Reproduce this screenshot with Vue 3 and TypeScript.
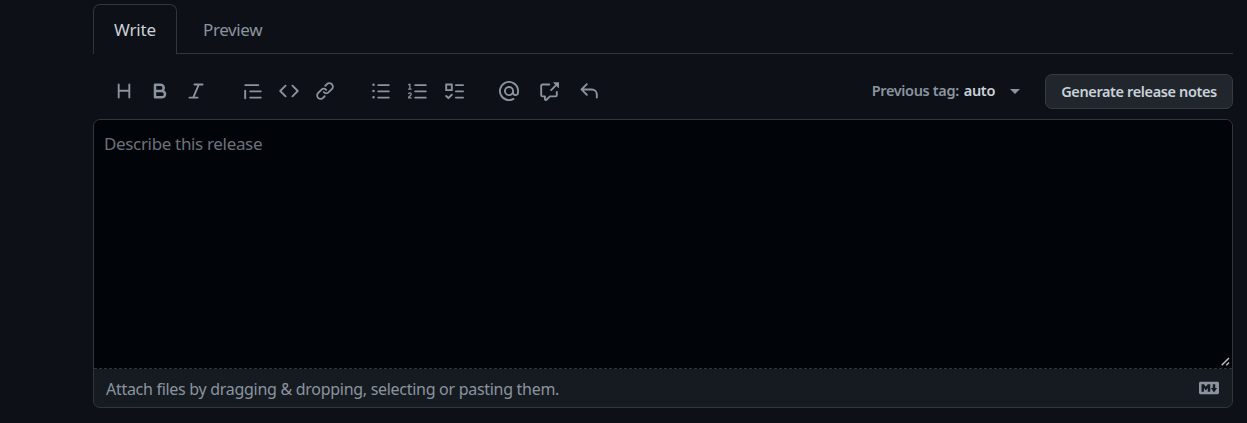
<script setup lang="ts">
interface ToolIcon {
  name: string
  path: string
}

const groups: ToolIcon[][] = [
  [
    { name: 'heading', path: 'M3.75 2a.75.75 0 01.75.75V7h7V2.75a.75.75 0 011.5 0v10.5a.75.75 0 01-1.5 0V8.5h-7v4.75a.75.75 0 01-1.5 0V2.75A.75.75 0 013.75 2z' },
    { name: 'bold', path: 'M4 2a1 1 0 00-1 1v10a1 1 0 001 1h5.5a3.5 3.5 0 001.852-6.47A3.5 3.5 0 008.5 2H4zm4.5 5a1.5 1.5 0 100-3H5v3h3.5zM5 9v3h4.5a1.5 1.5 0 000-3H5z' },
    { name: 'italic', path: 'M6 2.75A.75.75 0 016.75 2h6.5a.75.75 0 010 1.5h-2.505l-3.858 9H9.25a.75.75 0 010 1.5h-6.5a.75.75 0 010-1.5h2.505l3.858-9H6.75A.75.75 0 016 2.75z' },
  ],
  [
    { name: 'quote', path: 'M1.75 2.5a.75.75 0 000 1.5h10.5a.75.75 0 000-1.5H1.75zm4 5a.75.75 0 000 1.5h8.5a.75.75 0 000-1.5h-8.5zm0 5a.75.75 0 000 1.5h8.5a.75.75 0 000-1.5h-8.5zM2.5 7.75a.75.75 0 00-1.5 0v6a.75.75 0 001.5 0v-6z' },
    { name: 'code', path: 'M4.72 3.22a.75.75 0 011.06 1.06L2.06 8l3.72 3.72a.75.75 0 11-1.06 1.06L.47 8.53a.75.75 0 010-1.06l4.25-4.25zm6.56 0a.75.75 0 10-1.06 1.06L13.94 8l-3.72 3.72a.75.75 0 101.06 1.06l4.25-4.25a.75.75 0 000-1.06l-4.25-4.25z' },
    { name: 'link', path: 'M7.775 3.275a.75.75 0 001.06 1.06l1.25-1.25a2 2 0 112.83 2.83l-2.5 2.5a2 2 0 01-2.83 0 .75.75 0 00-1.06 1.06 3.5 3.5 0 004.95 0l2.5-2.5a3.5 3.5 0 00-4.95-4.95l-1.25 1.25zm-4.69 9.64a2 2 0 010-2.83l2.5-2.5a2 2 0 012.83 0 .75.75 0 001.06-1.06 3.5 3.5 0 00-4.95 0l-2.5 2.5a3.5 3.5 0 004.95 4.95l1.25-1.25a.75.75 0 00-1.06-1.06l-1.25 1.25a2 2 0 01-2.83 0z' },
  ],
  [
    { name: 'bullets', path: 'M2 4a1 1 0 100-2 1 1 0 000 2zm3.75-1.5a.75.75 0 000 1.5h8.5a.75.75 0 000-1.5h-8.5zm0 5a.75.75 0 000 1.5h8.5a.75.75 0 000-1.5h-8.5zm0 5a.75.75 0 000 1.5h8.5a.75.75 0 000-1.5h-8.5zM3 8a1 1 0 11-2 0 1 1 0 012 0zm-1 6a1 1 0 100-2 1 1 0 000 2z' },
    { name: 'numbers', path: 'M2.003 2.5a.5.5 0 00-.723-.447l-1.003.5a.5.5 0 00.446.895l.28-.14V6H.5a.5.5 0 000 1h2.006a.5.5 0 100-1h-.503V2.5zM5 3.25a.75.75 0 01.75-.75h8.5a.75.75 0 010 1.5h-8.5A.75.75 0 015 3.25zm0 5a.75.75 0 01.75-.75h8.5a.75.75 0 010 1.5h-8.5A.75.75 0 015 8.25zm0 5a.75.75 0 01.75-.75h8.5a.75.75 0 010 1.5h-8.5a.75.75 0 01-.75-.75zM.924 10.32l.003-.004a.851.851 0 01.144-.153A.66.66 0 011.5 10c.195 0 .306.068.374.146a.57.57 0 01.128.376c0 .453-.269.682-.8 1.078l-.035.025C.692 11.98 0 12.495 0 13.5a.5.5 0 00.5.5h2.003a.5.5 0 000-1H1.146c.132-.197.351-.372.654-.597l.047-.035c.47-.35 1.156-.858 1.156-1.845 0-.365-.118-.744-.377-1.038-.268-.303-.658-.484-1.126-.484-.48 0-.84.202-1.068.392a1.858 1.858 0 00-.348.384l-.007.011-.002.004-.001.002-.001.001a.5.5 0 00.851.525z' },
    { name: 'tasks', path: 'M1.5 2A.5.5 0 001 2.500v5a.5.5 0 00.5.5h5a.5.5 0 00.5-.5v-5a.5.5 0 00-.5-.5h-5zm1 1.500h3v3h-3v-3zM9.500 2.500a.75.75 0 000 1.500h5.750a.75.75 0 000-1.500H9.500zm0 5a.75.75 0 000 1.500h5.750a.75.75 0 000-1.500H9.500zm0 5a.75.75 0 000 1.500h5.750a.75.75 0 000-1.500H9.500zM6.780 11.530a.75.75 0 10-1.060-1.060L3.500 12.690l-1.220-1.220a.75.75 0 10-1.060 1.060l1.750 1.750a.75.75 0 001.060 0l2.750-2.750z' },
  ],
  [
    { name: 'mention', path: 'M4.75 2.37a6.5 6.5 0 006.5 11.26.75.75 0 01.75 1.298 8 8 0 113.994-7.273.754.754 0 01.006.095v1.5a2.75 2.75 0 01-5.072 1.475A4 4 0 1112 8v1.25a1.25 1.25 0 002.5 0V7.867a6.5 6.5 0 00-9.75-5.496V2.37zM10.5 8a2.5 2.5 0 10-5 0 2.5 2.5 0 005 0z' },
    { name: 'reference', path: 'M16 1.25v4.146a.25.25 0 01-.427.177L14.03 4.03l-3.75 3.75a.75.75 0 11-1.06-1.06l3.75-3.75-1.543-1.543A.25.25 0 0111.604 1h4.146a.25.25 0 01.25.25zM2.75 3.5a.25.25 0 00-.25.25v7.5c0 .138.112.25.25.25h2a.75.75 0 01.75.75v2.19l2.72-2.72a.75.75 0 01.53-.22h4.5a.25.25 0 00.25-.25v-2.5a.75.75 0 111.5 0v2.5A1.75 1.75 0 0113.25 13H9.06l-2.573 2.573A1.457 1.457 0 014 14.543V13H2.75A1.75 1.75 0 011 11.25v-7.5C1 2.784 1.784 2 2.75 2h5.5a.75.75 0 010 1.5h-5.5z' },
    { name: 'reply', path: 'M6.78 1.97a.75.75 0 010 1.06L3.81 6h6.44A4.75 4.75 0 0115 10.75v2.5a.75.75 0 01-1.5 0v-2.5a3.25 3.25 0 00-3.25-3.25H3.81l2.97 2.97a.75.75 0 11-1.06 1.06L1.47 7.28a.75.75 0 010-1.06l4.25-4.25a.75.75 0 011.06 0z' },
  ],
]
</script>

<template>
  <main class="page">
    <nav class="tabs">
      <button class="tab active" type="button">Write</button>
      <button class="tab" type="button">Preview</button>
    </nav>
    <div class="toolbar">
      <div class="groups">
        <div v-for="(group, i) in groups" :key="i" class="group" :class="{ wide: i === 3 }">
          <svg v-for="icon in group" :key="icon.name" class="icon" viewBox="0 0 16 16" fill-rule="evenodd">
            <path :d="icon.path" />
          </svg>
        </div>
      </div>
      <div class="tag">
        <span>Previous tag:</span><span class="value">auto</span>
        <i class="caret"></i>
      </div>
      <button class="generate" type="button">Generate release notes</button>
    </div>
    <section class="editor">
      <div class="area">
        <span>Describe this release</span>
        <svg class="grip" viewBox="0 0 9 9"><path d="M.7 8.300L8 1M5.300 8.300L8 5.600" /></svg>
      </div>
      <div class="attach">
        <span class="hint">Attach files by dragging &amp; dropping, selecting or pasting them.</span>
        <svg class="icon" viewBox="0 0 16 16" fill-rule="evenodd">
          <path d="M14.85 3H1.15C.52 3 0 3.52 0 4.15v7.69C0 12.48.52 13 1.15 13h13.69c.64 0 1.15-.52 1.15-1.15v-7.7C16 3.52 15.48 3 14.85 3zM9 11H7V8L5.5 9.92 4 8v3H2V5h2l1.5 2L7 5h2v6zm2.99.5L9.5 8H11V5h2v3h1.5l-2.51 3.5z" />
        </svg>
      </div>
    </section>
  </main>
</template>

<style>
body {
  margin: 0;
  background: #0d1017;
}
</style>

<style scoped>
.page {
  box-sizing: border-box;
  width: 1247px;
  height: 423px;
  padding: 4px 14px 0 93px;
  overflow: hidden;
  background: #0d1017;
  color: #8b949e;
  font-family: "Noto Sans", "Open Sans", sans-serif;
}
button {
  font: inherit;
  color: inherit;
  margin: 0;
  padding: 0;
}
span {
  white-space: nowrap;
}
.tabs {
  display: flex;
  height: 50px;
  box-sizing: border-box;
  background: linear-gradient(#30363d, #30363d) 84px 100% / 100% 1px no-repeat;
}
.tab {
  box-sizing: border-box;
  height: 50px;
  padding: 2px 0 0 26px;
  border: 0;
  background: none;
  font-size: 17px;
  line-height: 48px;
  letter-spacing: -0.38px;
  text-align: left;
}
.tab.active {
  width: 84px;
  padding: 0 0 0 20px;
  letter-spacing: -0.2px;
  border: 1px solid #30363d;
  border-bottom: 0;
  border-radius: 7px 7px 0 0;
  background: #0d1017;
  color: #c9d1d9;
}
.toolbar {
  display: flex;
  align-items: center;
  height: 35px;
  margin-top: 20px;
}
.groups {
  display: flex;
  gap: 36px;
  padding: 0 0 2px 21px;
}
.group {
  display: flex;
  gap: 16px;
}
.group.wide {
  gap: 20px;
}
.icon {
  display: block;
  width: 20px;
  height: 20px;
  fill: #8b949e;
}
.group:nth-child(2) {
  margin-left: 1px;
}
.group:nth-child(3) .icon:nth-child(2) {
  margin-left: 1px;
}
.group.wide {
  margin-left: -1px;
}
.tag {
  display: flex;
  align-items: center;
  margin-left: auto;
  padding-bottom: 3px;
  font-size: 14.5px;
  font-weight: 600;
  letter-spacing: -0.35px;
}
.value {
  margin-left: 5px;
  color: #c9d1d9;
}
.caret {
  margin: 3px 25px 0 15px;
  border: 5px solid transparent;
  border-top-color: #8b949e;
  border-bottom: 0;
}
.generate {
  box-sizing: border-box;
  width: 188px;
  height: 35px;
  padding-bottom: 2px;
  border: 1px solid #363b42;
  border-radius: 7px;
  background: #21262d;
  color: #c9d1d9;
  font-size: 14.5px;
  font-weight: 600;
  letter-spacing: -0.38px;
}
.editor {
  box-sizing: border-box;
  height: 289px;
  margin-top: 10px;
  border: 1px solid #30363d;
  border-radius: 7px;
  background: #161b22;
  overflow: hidden;
}
.area {
  position: relative;
  box-sizing: border-box;
  height: 249px;
  padding: 12px 10px;
  border-bottom: 1px dashed #30363d;
  background: #010409;
  color: #6b727b;
  font-size: 17px;
  line-height: 24px;
  letter-spacing: -0.34px;
}
.grip {
  position: absolute;
  right: 2px;
  bottom: 2px;
  width: 9px;
  height: 9px;
  fill: none;
  stroke: #c4c4c4;
  stroke-width: 1.4;
}
.attach {
  display: flex;
  align-items: center;
  justify-content: space-between;
  height: 38px;
  padding: 0 13px 0 12px;
  font-size: 16px;
  letter-spacing: -0.29px;
}
.hint {
  padding-top: 2px;
}
</style>
